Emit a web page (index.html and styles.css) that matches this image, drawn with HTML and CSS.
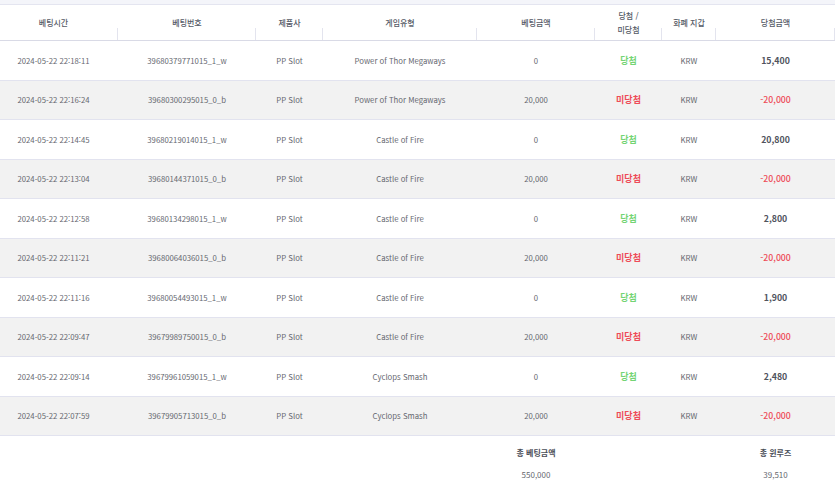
FILE: index.html
```html
<!DOCTYPE html>
<html lang="ko">
<head>
<meta charset="utf-8">
<link rel="stylesheet" href="styles.css">
</head>
<body>
<div class="topstrip"></div>
<table class="bets">
  <colgroup>
    <col class="c1"><col class="c2"><col class="c3"><col class="c4"><col class="c5"><col class="c6"><col class="c7"><col class="c8">
  </colgroup>
  <thead>
    <tr>
      <th class="first">베팅시간</th>
      <th>베팅번호</th>
      <th>제품사</th>
      <th>게임유형</th>
      <th>베팅금액</th>
      <th>당첨 /<br>미당첨</th>
      <th>화폐 지갑</th>
      <th>당첨금액</th>
    </tr>
  </thead>
  <tbody>
    <tr><td class="first">2024-05-22 22:18:11</td><td>39680379771015_1_w</td><td>PP Slot</td><td>Power of Thor Megaways</td><td>0</td><td class="win">당첨</td><td>KRW</td><td class="amt">15,400</td></tr>
    <tr class="alt"><td class="first">2024-05-22 22:16:24</td><td>39680300295015_0_b</td><td>PP Slot</td><td>Power of Thor Megaways</td><td>20,000</td><td class="lose">미당첨</td><td>KRW</td><td class="amt neg">-20,000</td></tr>
    <tr><td class="first">2024-05-22 22:14:45</td><td>39680219014015_1_w</td><td>PP Slot</td><td>Castle of Fire</td><td>0</td><td class="win">당첨</td><td>KRW</td><td class="amt">20,800</td></tr>
    <tr class="alt"><td class="first">2024-05-22 22:13:04</td><td>39680144371015_0_b</td><td>PP Slot</td><td>Castle of Fire</td><td>20,000</td><td class="lose">미당첨</td><td>KRW</td><td class="amt neg">-20,000</td></tr>
    <tr><td class="first">2024-05-22 22:12:58</td><td>39680134298015_1_w</td><td>PP Slot</td><td>Castle of Fire</td><td>0</td><td class="win">당첨</td><td>KRW</td><td class="amt">2,800</td></tr>
    <tr class="alt"><td class="first">2024-05-22 22:11:21</td><td>39680064036015_0_b</td><td>PP Slot</td><td>Castle of Fire</td><td>20,000</td><td class="lose">미당첨</td><td>KRW</td><td class="amt neg">-20,000</td></tr>
    <tr><td class="first">2024-05-22 22:11:16</td><td>39680054493015_1_w</td><td>PP Slot</td><td>Castle of Fire</td><td>0</td><td class="win">당첨</td><td>KRW</td><td class="amt">1,900</td></tr>
    <tr class="alt"><td class="first">2024-05-22 22:09:47</td><td>39679989750015_0_b</td><td>PP Slot</td><td>Castle of Fire</td><td>20,000</td><td class="lose">미당첨</td><td>KRW</td><td class="amt neg">-20,000</td></tr>
    <tr><td class="first">2024-05-22 22:09:14</td><td>39679961059015_1_w</td><td>PP Slot</td><td>Cyclops Smash</td><td>0</td><td class="win">당첨</td><td>KRW</td><td class="amt">2,480</td></tr>
    <tr class="alt"><td class="first">2024-05-22 22:07:59</td><td>39679905713015_0_b</td><td>PP Slot</td><td>Cyclops Smash</td><td>20,000</td><td class="lose">미당첨</td><td>KRW</td><td class="amt neg">-20,000</td></tr>
  </tbody>
  <tfoot>
    <tr class="sum-label"><td></td><td></td><td></td><td></td><td>총 베팅금액</td><td></td><td></td><td>총 윈루즈</td></tr>
    <tr class="sum-value"><td></td><td></td><td></td><td></td><td>550,000</td><td></td><td></td><td>39,510</td></tr>
  </tfoot>
</table>
</body>
</html>
```

FILE: styles.css
```css
html, body {
  margin: 0;
  padding: 0;
  background: #ffffff;
}

body {
  font-family: "Noto Sans CJK KR", "Noto Sans", sans-serif;
  color: #666666;
  width: 835px;
  overflow: hidden;
}

.topstrip {
  height: 4px;
  background: #f4f5fa;
  border-bottom: 1px solid #e4e5f0;
}

.bets {
  width: 835px;
  border-collapse: collapse;
  table-layout: fixed;
}

.c1 { width: 118px; }
.c2 { width: 138px; }
.c3 { width: 67px; }
.c4 { width: 154px; }
.c5 { width: 118px; }
.c6 { width: 67px; }
.c7 { width: 54px; }
.c8 { width: 119px; }

.bets th {
  position: relative;
  height: 35px;
  padding: 0;
  font-size: 8px;
  font-weight: 500;
  color: #555a66;
  line-height: 14px;
  text-align: center;
  vertical-align: middle;
  border-bottom: 1px solid #d9dae6;
}

.bets th::after {
  content: "";
  position: absolute;
  right: 0;
  bottom: 0;
  width: 1px;
  height: 12px;
  background: #e3e4ee;
}

.bets th.first {
  padding-right: 11px;
}

.bets tbody td {
  height: 37.5px;
  padding: 1px 0 0;
  font-size: 7.75px;
  line-height: 12px;
  text-align: center;
  vertical-align: middle;
  color: #666870;
  border-bottom: 1px solid #e2e3ef;
  white-space: nowrap;
}

.bets tbody td.first {
  padding-right: 11px;
}

.bets tbody tr.alt td {
  background: #f2f2f2;
}

.bets td.win {
  color: #74d474;
  font-weight: 700;
  font-size: 9px;
}

.bets td.lose {
  color: #ee4c58;
  font-weight: 700;
  font-size: 9px;
}

.bets td.amt {
  color: #50535d;
  font-size: 8.75px;
  font-weight: 600;
}

.bets td.amt.neg {
  color: #ee4c58;
  font-weight: 500;
}

.bets tfoot td {
  padding: 0;
  text-align: center;
  vertical-align: middle;
  font-size: 8px;
  line-height: 12px;
}

.sum-label td {
  height: 33px;
  color: #4a4d57;
  font-weight: 600;
}

.sum-value td {
  height: 12px;
  color: #666870;
  font-size: 7.75px;
}
```
